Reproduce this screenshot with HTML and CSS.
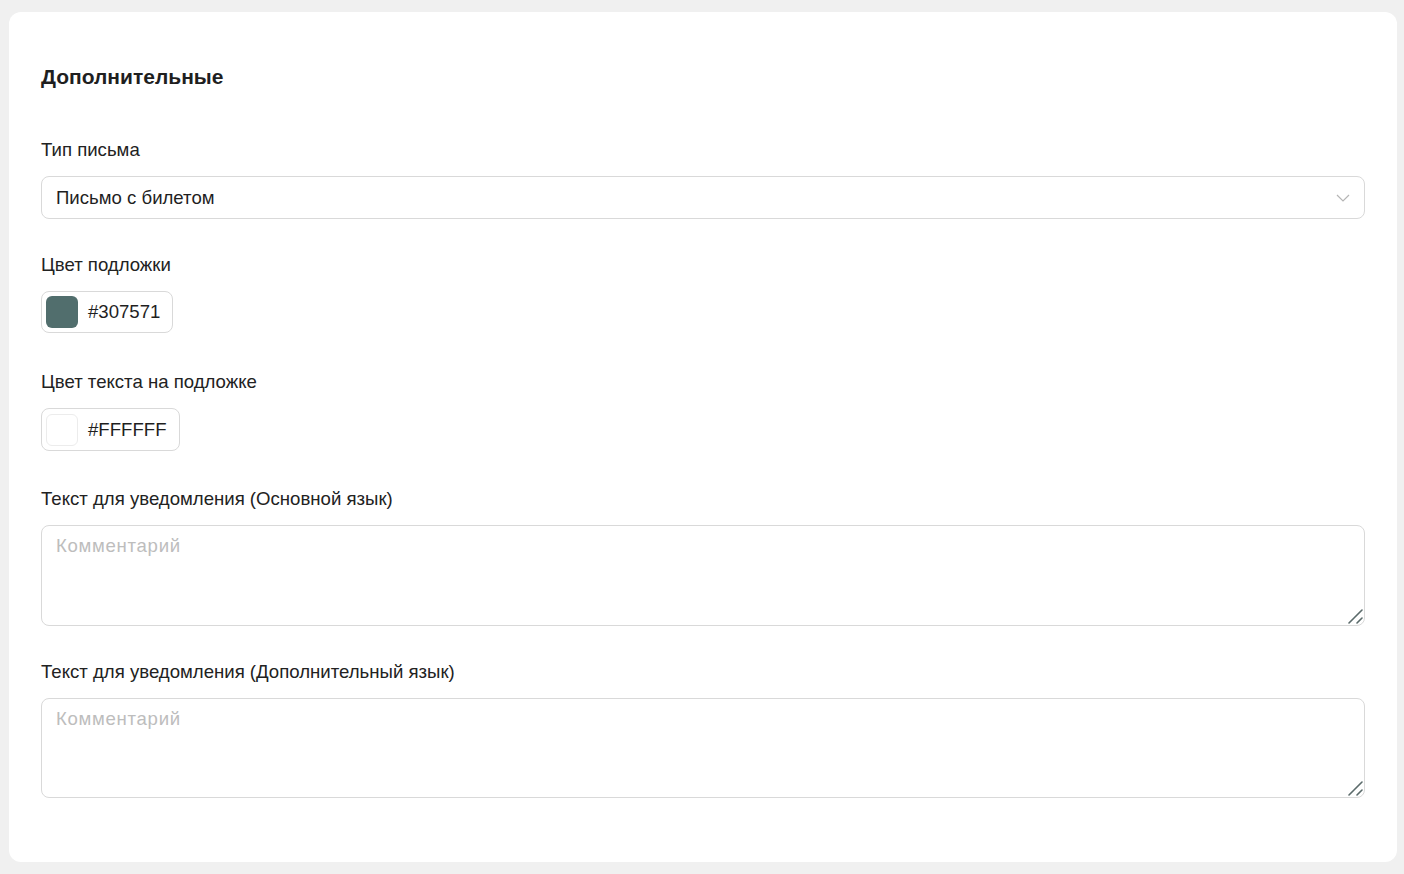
FILE: index.html
```html
<!DOCTYPE html>
<html lang="ru">
<head>
<meta charset="utf-8">
<title>Дополнительные</title>
<link rel="stylesheet" href="styles.css">
</head>
<body>
<div class="card">
  <h2 class="title">Дополнительные</h2>

  <div class="field">
    <label class="label">Тип письма</label>
    <div class="select">
      <span>Письмо с билетом</span>
      <svg class="chevron" width="14" height="8" viewBox="0 0 14 8"><path d="M1 1l6 6 6-6" fill="none" stroke="#b5b5b5" stroke-width="1.2"/></svg>
    </div>
  </div>

  <div class="field field-color">
    <label class="label">Цвет подложки</label>
    <div class="color">
      <span class="swatch swatch-dark"></span>
      <span class="hex">#307571</span>
    </div>
  </div>

  <div class="field field-color">
    <label class="label">Цвет текста на подложке</label>
    <div class="color">
      <span class="swatch swatch-white"></span>
      <span class="hex">#FFFFFF</span>
    </div>
  </div>

  <div class="field">
    <label class="label">Текст для уведомления (Основной язык)</label>
    <div class="ta-wrap">
      <textarea class="textarea" placeholder="Комментарий"></textarea>
      <svg class="grip" width="16" height="16" viewBox="0 0 16 16"><path d="M2 15L15 2M10 15l5-5" stroke="#5b6b6b" stroke-width="1.6" stroke-linecap="round"/></svg>
    </div>
  </div>

  <div class="field last">
    <label class="label">Текст для уведомления (Дополнительный язык)</label>
    <div class="ta-wrap">
      <textarea class="textarea ta-short" placeholder="Комментарий"></textarea>
      <svg class="grip" width="16" height="16" viewBox="0 0 16 16"><path d="M2 15L15 2M10 15l5-5" stroke="#5b6b6b" stroke-width="1.6" stroke-linecap="round"/></svg>
    </div>
  </div>
</div>
</body>
</html>
```

FILE: styles.css
```css
html, body {
  margin: 0;
  padding: 0;
}
body {
  background: #f0f0f0;
  padding: 12px 7px 12px 9px;
  font-family: "Liberation Sans", Arial, sans-serif;
  color: #1f1f1f;
}
.card {
  background: #fff;
  border-radius: 12px;
  padding: 53px 32px 64px;
}
.title {
  margin: 0 0 50px;
  font-size: 21px;
  line-height: 24px;
  font-weight: bold;
  color: #1f1f1f;
}
.field {
  display: flex;
  flex-direction: column;
  align-items: flex-start;
  margin-bottom: 35px;
}
.field-color {
  margin-bottom: 38px;
}
.field.last {
  margin-bottom: 0;
}
.label {
  font-size: 18.6px;
  line-height: 22px;
  margin-bottom: 15px;
  color: #222;
}
.select {
  box-sizing: border-box;
  width: 100%;
  height: 43px;
  border: 1px solid #d9d9d9;
  border-radius: 8px;
  display: flex;
  align-items: center;
  justify-content: space-between;
  padding: 0 14px 0 14px;
  font-size: 18.6px;
  color: #1f1f1f;
}
.chevron {
  display: block;
}
.color {
  box-sizing: border-box;
  height: 42px;
  border: 1px solid #d9d9d9;
  border-radius: 8px;
  display: flex;
  align-items: center;
  padding: 0 12px 0 4px;
  gap: 10px;
}
.field-color + .field-color .color {
  height: 43px;
}
.field-color + .field-color {
  margin-bottom: 37px;
}
.swatch {
  width: 32px;
  height: 32px;
  border-radius: 6px;
  box-sizing: border-box;
}
.swatch-dark {
  background: #516e6d;
}
.swatch-white {
  background: #fff;
  border: 1px solid #ececec;
}
.hex {
  font-size: 18.6px;
  color: #1f1f1f;
}
.ta-wrap {
  position: relative;
  width: 100%;
}
.textarea {
  box-sizing: border-box;
  width: 100%;
  height: 101px;
  border: 1px solid #d9d9d9;
  border-radius: 8px;
  padding: 9px 14px;
  font-family: "Liberation Sans", Arial, sans-serif;
  font-size: 18.6px;
  line-height: 22px;
  color: #1f1f1f;
  resize: none;
  outline: none;
  margin: 0;
  display: block;
}
.ta-short {
  height: 100px;
}
.textarea::placeholder {
  color: #bdbdbd;
  letter-spacing: 0.7px;
}
.grip {
  position: absolute;
  right: 2px;
  bottom: 2px;
  pointer-events: none;
}
```
